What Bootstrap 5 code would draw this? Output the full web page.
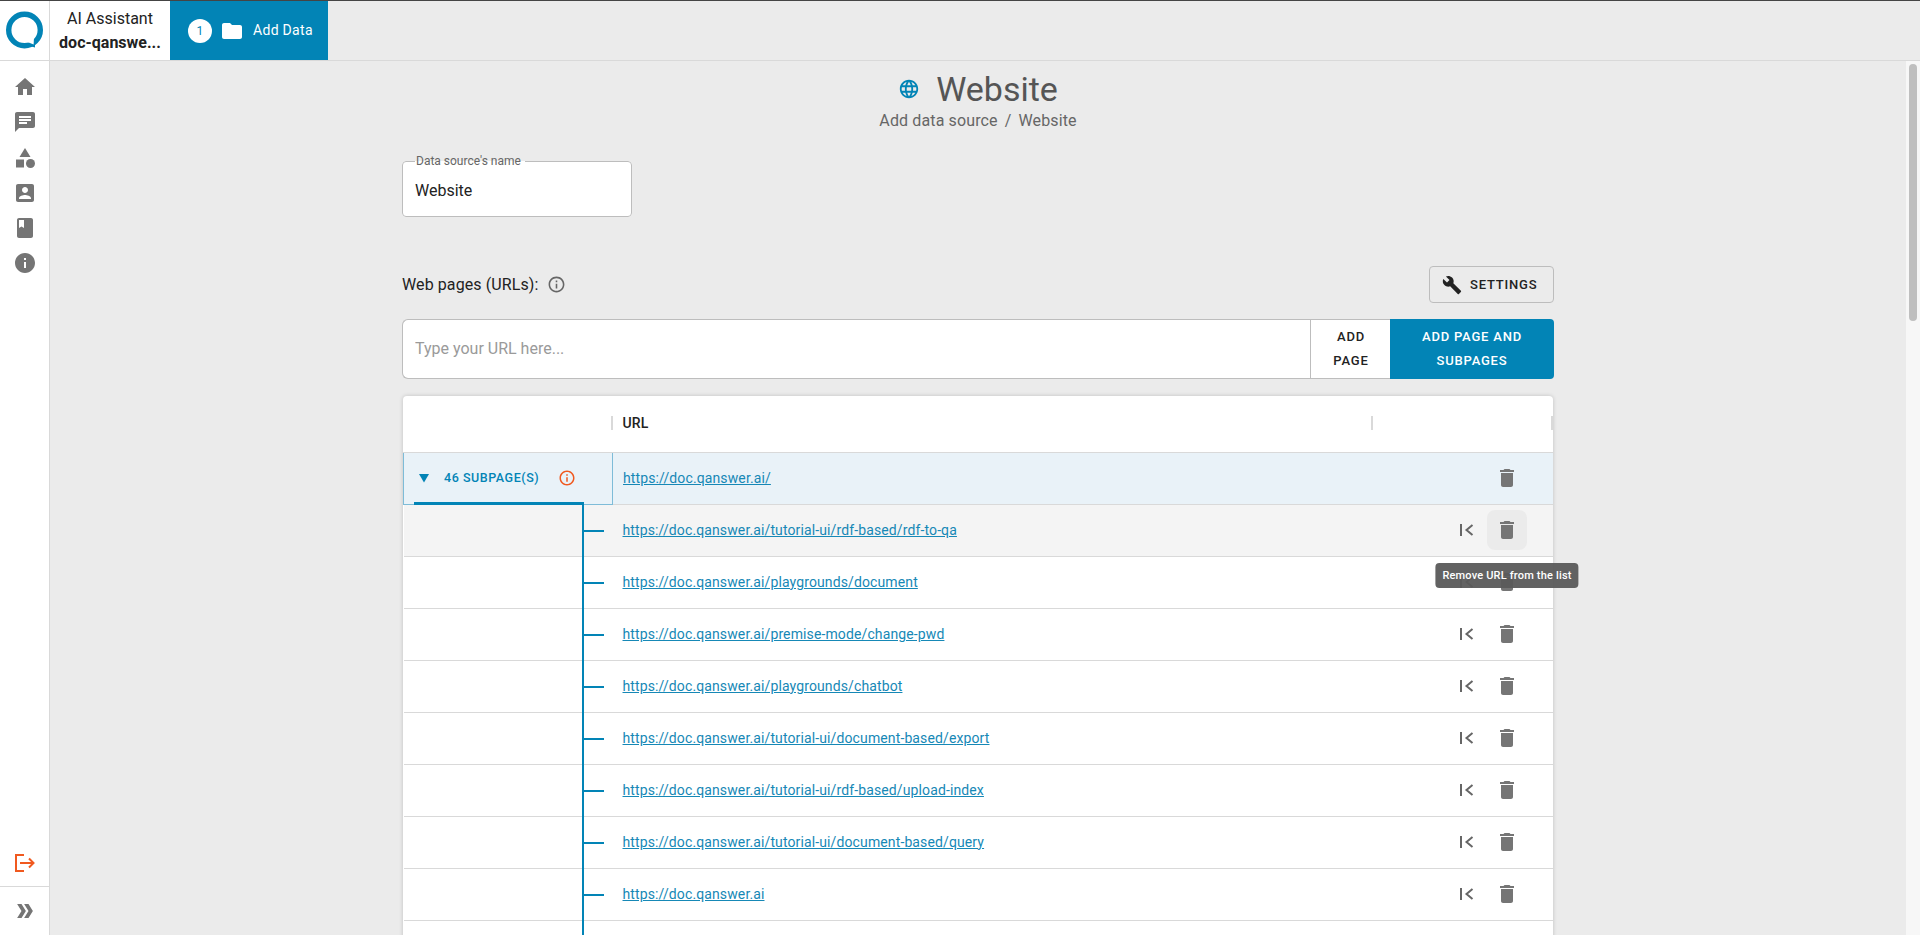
<!DOCTYPE html>
<html lang="en">
<head>
    <meta charset="UTF-8">
    <meta name="viewport" content="width=device-width, initial-scale=1.0">
    <title>Website - Add data source</title>
    <link href="https://cdn.jsdelivr.net/npm/bootstrap@5.3.0/dist/css/bootstrap.min.css" rel="stylesheet">
    <style>
        :root { --qa-blue: #0284b6; --qa-bg: #ebebeb; --qa-line: #d9d9d9; }
        html, body { height: 100%; overflow: hidden; }
        body { font-family: Roboto, "Liberation Sans", sans-serif; background: var(--qa-bg); color: #222; border-top: 1px solid #444; }
        .top-strip { height: 60px; border-bottom: 1px solid var(--qa-line); flex: none; }
        .logo-box { width: 50px; background: #fff; border-right: 1px solid var(--qa-line); }
        .bot-box { width: 120px; background: #fff; font-size: 16px; line-height: 24px; text-align: center; }
        .bot-box b { font-weight: 700; }
        .step-tab { width: 158px; height: 59px; background: var(--qa-blue); color: #fff; font-size: 14px; font-weight: 400; letter-spacing: .3px; padding-left: 18px; }
        .step-num { width: 24px; height: 24px; border-radius: 50%; background: #fff; color: var(--qa-blue); font-size: 12px; margin-right: 8px; }
        .step-label { margin-left: 9px; }
        .side-bar { width: 50px; background: #fff; border-right: 1px solid var(--qa-line); flex: none; }
        .side-icons { padding-top: 14px; gap: 11.3px; }
        .side-icons svg { width: 24px; height: 24px; fill: #757575; }
        .side-exit { padding-bottom: 13px; }
        .side-foot { border-top: 1px solid var(--qa-line); height: 49px; }
        .page-main { min-width: 0; }
        .fake-scroll { width: 14px; flex: none; background: #f7f7f7; padding: 3px; }
        .fake-thumb { height: 257px; background: #bfbfbf; border-radius: 4px; }
        .title-block { padding-top: 8px; }
        .page-title { font-size: 34px; line-height: 40px; color: #555; font-weight: 400; margin: 0; }
        .page-crumb { font-size: 16px; line-height: 20px; color: #666; letter-spacing: .13px; margin-top: 2px; }
        .crumb-sep { margin: 0 7px; }
        .form-wrap { width: 1152px; margin: 0 auto; }
        .name-box { width: 230px; height: 62px; margin: 24px 0 0; padding: 0 12px; background: #fff; border: 1px solid #bdbdbd; border-radius: 4px; min-width: 0; }
        .name-box legend { float: none; width: auto; margin: 0; padding: 0 4px 0 1px; font-size: 12px; line-height: 12px; color: #666; }
        .name-box input { border: 0; outline: 0; padding: 0; width: 100%; height: 46px; background: transparent; font-size: 16px; color: #222; }
        .url-row { margin-top: 49px; }
        .url-label { font-size: 16px; letter-spacing: .1px; color: #222; }
        .settings-btn { width: 125px; height: 37px; font-size: 13px; font-weight: 500; letter-spacing: .8px; color: #222; border: 1px solid #bdbdbd; border-radius: 4px; background: transparent; padding: 0 0 0 12px; }
        .url-group { height: 60px; }
        .url-group .form-control { border-color: #bdbdbd; border-right: 0; font-size: 16px; padding-left: 12px; }
        .url-group .form-control::placeholder { color: #9a9a9a; }
        .url-group .btn { border-radius: 0; font-size: 13px; font-weight: 500; letter-spacing: .8px; line-height: 24px; padding: 0 10px; }
        .url-group .btn-page { width: 81px; background: #fff; color: #222; border: 1px solid #bdbdbd; border-right: 0; }
        .url-group .btn-sub { width: 164px; background: var(--qa-blue); color: #fff; border: 0; border-radius: 0 4px 4px 0; }
        .url-panel { background: #fff; border-radius: 4px; margin: 17px 1px 0; box-shadow: 0 0 4px rgba(0, 0, 0, .18); }
        .url-table { table-layout: fixed; width: 100%; margin: 0; --bs-table-border-color: var(--qa-line); }
        .url-table th, .url-table td { height: 52px; padding: 0; vertical-align: middle; background: transparent; box-shadow: none; }
        .url-table thead th { height: 56px; font-size: 14px; font-weight: 500; color: #222; position: relative; }
        .head-sep::after { content: ""; position: absolute; right: 0; top: 20px; width: 2px; height: 14px; background: var(--qa-line); }
        .url-cell { padding-left: 10px !important; font-size: 14px; letter-spacing: .12px; }
        .url-cell a { color: #1688b6; }
        .row-parent td { background: #e9f2f8; }
        .parent-cell { position: relative; border: 1px solid #7ebcd8 !important; }
        .parent-cell::after { content: ""; position: absolute; left: 10px; bottom: -1px; width: 170px; height: 3px; background: var(--qa-blue); }
        .parent-inner { color: var(--qa-blue); font-size: 12.5px; font-weight: 500; letter-spacing: .55px; padding-left: 15px; }
        .parent-count { margin: 0 19px 0 15px; }
        .row-hover td { background: #f4f4f4; }
        .tree-cell { position: relative; }
        .tree-cell::before { content: ""; position: absolute; left: 178px; top: 0; bottom: -1px; width: 2px; background: var(--qa-blue); z-index: 1; }
        .tree-cell::after { content: ""; position: absolute; left: 180px; top: 25px; width: 20px; height: 2px; background: var(--qa-blue); }
        .row-tools { padding-right: 26px; }
        .tool-btn { width: 40px; height: 40px; border-radius: 8px; position: relative; flex: none; }
        .tool-btn svg { fill: #757575; }
        .tool-btn.is-hover { background: #ebebeb; }
        .hint-box { position: absolute; top: 53px; left: 50%; transform: translateX(-50%); white-space: nowrap; background: rgba(90, 90, 90, .95); color: #fff; font-size: 11px; font-weight: 500; letter-spacing: .18px; line-height: 25px; padding: 0 7px; border-radius: 4px; z-index: 5; }
    </style>
</head>
<body class="d-flex flex-column">
    <svg width="0" height="0" class="position-absolute">
        <symbol id="i-trash" viewBox="0 0 24 24"><path d="M6 19c0 1.1.9 2 2 2h8c1.1 0 2-.9 2-2V7H6v12zM19 4h-3.5l-1-1h-5l-1 1H5v2h14V4z"/></symbol>
        <symbol id="i-back" viewBox="0 0 14 12"><path d="M1 0v12" stroke="#666" stroke-width="2" fill="none"/><path d="M12.5 1L6.5 6l6 5" stroke="#666" stroke-width="2" fill="none"/></symbol>
    </svg>

    <header class="top-strip d-flex">
        <div class="logo-box d-flex align-items-center justify-content-center">
            <svg width="40" height="40" viewBox="0 0 40 40"><circle cx="19.500" cy="19" r="15.800" fill="none" stroke="#0284b6" stroke-width="5.400"/><path d="M21 34l9-6 0 8.500z" fill="#0284b6"/><path d="M22.500 31l6.500-5-.4 7.500z" fill="#fff"/></svg>
        </div>
        <div class="bot-box d-flex flex-column justify-content-center">
            <span>AI Assistant</span>
            <b>doc-qanswe...</b>
        </div>
        <div class="step-tab d-flex align-items-center">
            <span class="step-num d-flex align-items-center justify-content-center">1</span>
            <svg width="24" height="24" viewBox="0 0 24 24" fill="#fff"><path d="M10 4H4c-1.1 0-1.99.9-1.99 2L2 18c0 1.1.9 2 2 2h16c1.1 0 2-.9 2-2V8c0-1.1-.9-2-2-2h-8l-2-2z"/></svg>
            <span class="step-label">Add Data</span>
        </div>
    </header>

    <div class="d-flex flex-grow-1 overflow-hidden">
        <nav class="side-bar d-flex flex-column">
            <div class="side-icons d-flex flex-column align-items-center flex-grow-1">
                <svg viewBox="0 0 24 24"><path d="M10 20v-6h4v6h5v-8h3L12 3 2 12h3v8z"/></svg>
                <svg viewBox="0 0 24 24"><path d="M20 2H4c-1.1 0-1.99.9-1.99 2L2 22l4-4h14c1.1 0 2-.9 2-2V4c0-1.1-.9-2-2-2zM6 9h12v2H6V9zm8 5H6v-2h8v2zm4-6H6V6h12v2z"/></svg>
                <svg viewBox="0 0 24 24"><path d="M12 2l-5.5 9h11z"/><circle cx="17.5" cy="17.5" r="4.5"/><path d="M3 13.5h8v8H3z"/></svg>
                <svg viewBox="0 0 24 24"><path d="M3 5v14c0 1.1.89 2 2 2h14c1.1 0 2-.9 2-2V5c0-1.1-.9-2-2-2H5c-1.11 0-2 .9-2 2zm12 4c0 1.66-1.34 3-3 3s-3-1.34-3-3 1.34-3 3-3 3 1.34 3 3zm-9 8c0-2 4-3.1 6-3.1s6 1.1 6 3.1v1H6v-1z"/></svg>
                <svg viewBox="0 0 24 24"><path d="M18 2H6c-1.1 0-2 .9-2 2v16c0 1.1.9 2 2 2h12c1.1 0 2-.9 2-2V4c0-1.1-.9-2-2-2zM6 4h5v8l-2.5-1.5L6 12V4z"/></svg>
                <svg viewBox="0 0 24 24"><path d="M12 2C6.48 2 2 6.48 2 12s4.48 10 10 10 10-4.48 10-10S17.52 2 12 2zm1 15h-2v-6h2v6zm0-8h-2V7h2v2z"/></svg>
            </div>
            <div class="side-exit d-flex justify-content-center">
                <svg width="22" height="20" viewBox="0 0 22 20" fill="none" stroke="#f0591f" stroke-width="2"><path d="M10 2H2v16h8"/><path d="M6 10h14M15 5.500l4.500 4.500-4.500 4.500"/></svg>
            </div>
            <div class="side-foot d-flex align-items-center justify-content-center">
                <svg width="16" height="14" viewBox="0 0 18 16" fill="#757575"><path d="M0 0h5l5 8-5 8H0l5-8zM8 0h5l5 8-5 8H8l5-8z"/></svg>
            </div>
        </nav>

        <main class="page-main flex-grow-1 overflow-hidden">
            <div class="title-block text-center">
                <div class="d-flex align-items-center justify-content-center gap-3">
                    <svg width="22" height="22" viewBox="0 0 24 24" fill="#0284b6"><path d="M11.99 2C6.47 2 2 6.48 2 12s4.47 10 9.99 10C17.52 22 22 17.52 22 12S17.52 2 11.99 2zm6.93 6h-2.95c-.32-1.25-.78-2.45-1.38-3.56 1.84.63 3.37 1.91 4.33 3.56zM12 4.040c.83 1.200 1.480 2.530 1.910 3.960h-3.820c.43-1.430 1.080-2.760 1.910-3.960zM4.260 14C4.100 13.360 4 12.690 4 12s.1-1.360.26-2h3.380c-.08.66-.14 1.320-.14 2 0 .68.06 1.340.14 2H4.260zm.82 2h2.950c.32 1.250.78 2.450 1.380 3.560-1.840-.63-3.370-1.900-4.330-3.560zm2.950-8H5.080c.96-1.660 2.490-2.930 4.330-3.560C8.810 5.550 8.350 6.750 8.030 8zM12 19.960c-.83-1.200-1.480-2.530-1.910-3.960h3.820c-.43 1.430-1.080 2.760-1.910 3.960zM14.340 14H9.660c-.09-.66-.16-1.320-.16-2 0-.68.07-1.350.16-2h4.680c.09.65.16 1.320.16 2 0 .68-.07 1.340-.16 2zm.25 5.560c.6-1.110 1.060-2.310 1.380-3.560h2.950c-.96 1.650-2.490 2.930-4.330 3.560zM16.360 14c.08-.66.14-1.320.14-2 0-.68-.06-1.340-.14-2h3.380c.16.64.26 1.310.26 2s-.1 1.360-.26 2h-3.380z"/></svg>
                    <h1 class="page-title">Website</h1>
                </div>
                <div class="page-crumb">Add data source<span class="crumb-sep">/</span>Website</div>
            </div>

            <div class="form-wrap">
                <fieldset class="name-box">
                    <legend>Data source's name</legend>
                    <input type="text" value="Website">
                </fieldset>

                <div class="url-row d-flex align-items-center justify-content-between">
                    <div class="url-label d-flex align-items-center gap-2">
                        <span>Web pages (URLs):</span>
                        <svg width="19" height="19" viewBox="0 0 24 24" fill="#666"><path d="M11 7h2v2h-2zm0 4h2v6h-2zm1-9C6.480 2 2 6.480 2 12s4.480 10 10 10 10-4.480 10-10S17.520 2 12 2zm0 18c-4.410 0-8-3.590-8-8s3.590-8 8-8 8 3.590 8 8-3.590 8-8 8z"/></svg>
                    </div>
                    <button type="button" class="btn settings-btn d-flex align-items-center gap-2">
                        <svg width="20" height="20" viewBox="0 0 24 24" fill="#222"><path d="M22.700 19l-9.100-9.100c.9-2.300.4-5-1.500-6.900-2-2-5-2.400-7.400-1.300L9 6 6 9 1.600 4.700C.4 7.100.9 10.100 2.900 12.100c1.900 1.900 4.600 2.400 6.900 1.500l9.100 9.100c.4.4 1 .4 1.400 0l2.300-2.300c.5-.4.5-1.100.1-1.400z"/></svg>
                        SETTINGS
                    </button>
                </div>

                <div class="input-group url-group mt-3">
                    <input type="text" class="form-control" placeholder="Type your URL here...">
                    <button type="button" class="btn btn-page">ADD<br>PAGE</button>
                    <button type="button" class="btn btn-sub">ADD PAGE AND<br>SUBPAGES</button>
                </div>

                <div class="url-panel">
                    <table class="table url-table">
                        <colgroup><col style="width:209px"><col><col style="width:180px"></colgroup>
                        <thead>
                            <tr>
                                <th class="head-sep"></th>
                                <th class="head-sep url-cell">URL</th>
                                <th class="head-sep"></th>
                            </tr>
                        </thead>
                        <tbody>
                            <tr class="row-parent">
                                <td class="parent-cell">
                                    <div class="parent-inner d-flex align-items-center">
                                        <svg width="10" height="10" viewBox="0 0 10 10" fill="#0284b6"><path d="M0 1h10L5 9.500z"/></svg>
                                        <span class="parent-count">46 SUBPAGE(S)</span>
                                        <svg width="18" height="18" viewBox="0 0 24 24" fill="#f0591f"><path d="M11 7h2v2h-2zm0 4h2v6h-2zm1-9C6.480 2 2 6.480 2 12s4.480 10 10 10 10-4.480 10-10S17.520 2 12 2zm0 18c-4.410 0-8-3.590-8-8s3.590-8 8-8 8 3.590 8 8-3.590 8-8 8z"/></svg>
                                    </div>
                                </td>
                                <td class="url-cell"><a href="#">https://doc.qanswer.ai/</a></td>
                                <td><div class="row-tools d-flex justify-content-end"><span class="tool-btn d-flex align-items-center justify-content-center"><svg width="24" height="24"><use href="#i-trash"/></svg></span></div></td>
                            </tr>
                            <tr class="row-hover">
                                <td class="tree-cell"></td>
                                <td class="url-cell"><a href="#">https://doc.qanswer.ai/tutorial-ui/rdf-based/rdf-to-qa</a></td>
                                <td><div class="row-tools d-flex justify-content-end"><span class="tool-btn d-flex align-items-center justify-content-center"><svg width="14" height="12"><use href="#i-back"/></svg></span><span class="tool-btn is-hover d-flex align-items-center justify-content-center"><svg width="24" height="24"><use href="#i-trash"/></svg><span class="hint-box">Remove URL from the list</span></span></div></td>
                            </tr>
                            <tr>
                                <td class="tree-cell"></td>
                                <td class="url-cell"><a href="#">https://doc.qanswer.ai/playgrounds/document</a></td>
                                <td><div class="row-tools d-flex justify-content-end"><span class="tool-btn d-flex align-items-center justify-content-center"><svg width="14" height="12"><use href="#i-back"/></svg></span><span class="tool-btn d-flex align-items-center justify-content-center"><svg width="24" height="24"><use href="#i-trash"/></svg></span></div></td>
                            </tr>
                            <tr>
                                <td class="tree-cell"></td>
                                <td class="url-cell"><a href="#">https://doc.qanswer.ai/premise-mode/change-pwd</a></td>
                                <td><div class="row-tools d-flex justify-content-end"><span class="tool-btn d-flex align-items-center justify-content-center"><svg width="14" height="12"><use href="#i-back"/></svg></span><span class="tool-btn d-flex align-items-center justify-content-center"><svg width="24" height="24"><use href="#i-trash"/></svg></span></div></td>
                            </tr>
                            <tr>
                                <td class="tree-cell"></td>
                                <td class="url-cell"><a href="#">https://doc.qanswer.ai/playgrounds/chatbot</a></td>
                                <td><div class="row-tools d-flex justify-content-end"><span class="tool-btn d-flex align-items-center justify-content-center"><svg width="14" height="12"><use href="#i-back"/></svg></span><span class="tool-btn d-flex align-items-center justify-content-center"><svg width="24" height="24"><use href="#i-trash"/></svg></span></div></td>
                            </tr>
                            <tr>
                                <td class="tree-cell"></td>
                                <td class="url-cell"><a href="#">https://doc.qanswer.ai/tutorial-ui/document-based/export</a></td>
                                <td><div class="row-tools d-flex justify-content-end"><span class="tool-btn d-flex align-items-center justify-content-center"><svg width="14" height="12"><use href="#i-back"/></svg></span><span class="tool-btn d-flex align-items-center justify-content-center"><svg width="24" height="24"><use href="#i-trash"/></svg></span></div></td>
                            </tr>
                            <tr>
                                <td class="tree-cell"></td>
                                <td class="url-cell"><a href="#">https://doc.qanswer.ai/tutorial-ui/rdf-based/upload-index</a></td>
                                <td><div class="row-tools d-flex justify-content-end"><span class="tool-btn d-flex align-items-center justify-content-center"><svg width="14" height="12"><use href="#i-back"/></svg></span><span class="tool-btn d-flex align-items-center justify-content-center"><svg width="24" height="24"><use href="#i-trash"/></svg></span></div></td>
                            </tr>
                            <tr>
                                <td class="tree-cell"></td>
                                <td class="url-cell"><a href="#">https://doc.qanswer.ai/tutorial-ui/document-based/query</a></td>
                                <td><div class="row-tools d-flex justify-content-end"><span class="tool-btn d-flex align-items-center justify-content-center"><svg width="14" height="12"><use href="#i-back"/></svg></span><span class="tool-btn d-flex align-items-center justify-content-center"><svg width="24" height="24"><use href="#i-trash"/></svg></span></div></td>
                            </tr>
                            <tr>
                                <td class="tree-cell"></td>
                                <td class="url-cell"><a href="#">https://doc.qanswer.ai</a></td>
                                <td><div class="row-tools d-flex justify-content-end"><span class="tool-btn d-flex align-items-center justify-content-center"><svg width="14" height="12"><use href="#i-back"/></svg></span><span class="tool-btn d-flex align-items-center justify-content-center"><svg width="24" height="24"><use href="#i-trash"/></svg></span></div></td>
                            </tr>
                            <tr>
                                <td class="tree-cell"></td>
                                <td class="url-cell"></td>
                                <td></td>
                            </tr>
                        </tbody>
                    </table>
                </div>
            </div>
        </main>
        <div class="fake-scroll"><div class="fake-thumb"></div></div>
    </div>
    <script src="https://cdn.jsdelivr.net/npm/bootstrap@5.3.0/dist/js/bootstrap.bundle.min.js"></script>
</body>
</html>
